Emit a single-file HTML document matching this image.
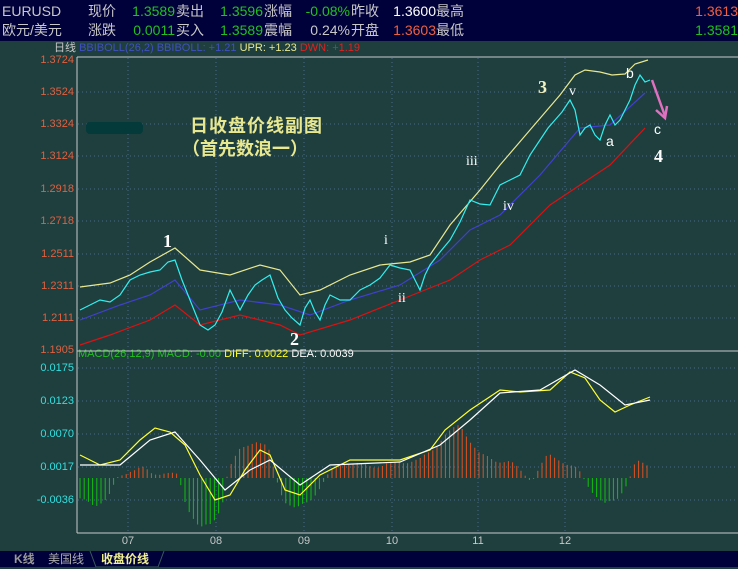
<!DOCTYPE html><html><head><meta charset="utf-8"><style>
body{margin:0;width:738px;height:567px;overflow:hidden;background:#1f3e3e;font-family:"Liberation Sans","Noto Sans CJK SC",sans-serif;position:relative}
.t{position:absolute;white-space:nowrap;font-size:14px;line-height:20px}
.n{position:absolute;white-space:nowrap;font-size:14px;line-height:20px;text-align:right;width:80px}
#hd{position:absolute;left:0;top:0;width:738px;height:41px;background:#00003a}
.g{color:#22c022}.w{color:#c8c8c8}.r{color:#f06040}.wh{color:#fff}
#tabs{position:absolute;left:0;top:551px;width:738px;height:16px;background:#00003a}
.pl{position:absolute;left:0;width:74px;text-align:right;font-size:11px;line-height:12px;color:#e06040}
.ml{position:absolute;left:0;width:74px;text-align:right;font-size:11px;line-height:12px;color:#30e0e0}
.xl{position:absolute;width:30px;text-align:center;font-size:11px;line-height:12px;color:#c8c8c8;top:535px}
.a{position:absolute;font-family:"Liberation Serif",serif;color:#fff;line-height:1}
</style></head><body>
<div id="hd">
<div class="t w" style="left:2px;top:1px">EURUSD</div>
<div class="t w" style="left:88px;top:1px">现价</div>
<div class="n g" style="left:95px;top:1px">1.3589</div><div class="t w" style="left:176px;top:1px">卖出</div>
<div class="n g" style="left:183px;top:1px">1.3596</div><div class="t w" style="left:264px;top:1px">涨幅</div>
<div class="n g" style="left:270px;top:1px">-0.08%</div><div class="t w" style="left:351px;top:1px">昨收</div>
<div class="n wh" style="left:356px;top:1px">1.3600</div><div class="t w" style="left:436px;top:1px">最高</div>
<div class="n r" style="left:658px;top:1px">1.3613</div>
<div class="t w" style="left:2px;top:20px">欧元/美元</div>
<div class="t w" style="left:88px;top:20px">涨跌</div>
<div class="n g" style="left:95px;top:20px">0.0011</div><div class="t w" style="left:176px;top:20px">买入</div>
<div class="n g" style="left:183px;top:20px">1.3589</div><div class="t w" style="left:264px;top:20px">震幅</div>
<div class="n w" style="left:270px;top:20px">0.24%</div><div class="t w" style="left:351px;top:20px">开盘</div>
<div class="n r" style="left:356px;top:20px">1.3603</div><div class="t w" style="left:436px;top:20px">最低</div>
<div class="n g" style="left:658px;top:20px">1.3581</div>
</div>
<div class="t" style="left:54px;top:40px;font-size:11px;line-height:16px"><span class="w">日线</span> <span style="color:#4050c0">BBIBOLL(26,2) BBIBOLL: +1.21</span> <span style="color:#e8e890">UPR: +1.23</span> <span style="color:#e02020">DWN: +1.19</span></div>
<div class="t" style="left:78px;top:346px;font-size:11px;line-height:16px"><span class="g">MACD(26,12,9) MACD: -0.00</span> <span style="color:#ffff20">DIFF: 0.0022</span> <span class="wh">DEA: 0.0039</span></div>
<div class="pl" style="top:54px">1.3724</div><div class="pl" style="top:86px">1.3524</div><div class="pl" style="top:118px">1.3324</div><div class="pl" style="top:150px">1.3124</div><div class="pl" style="top:183px">1.2918</div><div class="pl" style="top:215px">1.2718</div><div class="pl" style="top:248px">1.2511</div><div class="pl" style="top:280px">1.2311</div><div class="pl" style="top:312px">1.2111</div><div class="pl" style="top:344px">1.1905</div>
<div class="ml" style="top:362px">0.0175</div><div class="ml" style="top:395px">0.0123</div><div class="ml" style="top:428px">0.0070</div><div class="ml" style="top:461px">0.0017</div><div class="ml" style="top:494px">-0.0036</div>
<div class="xl" style="left:113px">07</div><div class="xl" style="left:201px">08</div><div class="xl" style="left:289px">09</div><div class="xl" style="left:377px">10</div><div class="xl" style="left:463px">11</div><div class="xl" style="left:550px">12</div>
<svg id="s" width="738" height="567" style="position:absolute;left:0;top:0">
<g stroke="#4a6a8a" stroke-dasharray="1,3">
<line x1="78" y1="92" x2="738" y2="92"/><line x1="78" y1="124" x2="738" y2="124"/><line x1="78" y1="156" x2="738" y2="156"/><line x1="78" y1="189" x2="738" y2="189"/><line x1="78" y1="221" x2="738" y2="221"/><line x1="78" y1="254" x2="738" y2="254"/><line x1="78" y1="286" x2="738" y2="286"/><line x1="78" y1="318" x2="738" y2="318"/>
<line x1="78" y1="368" x2="738" y2="368"/><line x1="78" y1="401" x2="738" y2="401"/><line x1="78" y1="434" x2="738" y2="434"/><line x1="78" y1="467" x2="738" y2="467"/><line x1="78" y1="500" x2="738" y2="500"/>
<line x1="128" y1="58" x2="128" y2="533"/><line x1="216" y1="58" x2="216" y2="533"/><line x1="304" y1="58" x2="304" y2="533"/><line x1="392" y1="58" x2="392" y2="533"/><line x1="478" y1="58" x2="478" y2="533"/><line x1="565" y1="58" x2="565" y2="533"/>
</g>
<g stroke="#c8c8c8"><line x1="77" y1="57" x2="738" y2="57"/><line x1="77" y1="57" x2="77" y2="533"/><line x1="77" y1="351" x2="738" y2="351"/><line x1="77" y1="533" x2="738" y2="533"/></g>
<g id="hist"></g>
<g fill="none" stroke-width="1.2">
<polyline stroke="#ffff30" points="80,455 100,465 120,460 140,440 155,428 170,432 185,445 200,475 215,500 230,495 245,470 260,450 270,455 285,490 300,495 320,475 350,460 400,460 430,450 445,430 470,410 500,390 520,392 550,390 570,372 585,378 600,400 615,412 630,405 650,397"/>
<polyline stroke="#fff" points="80,465 120,465 150,440 175,432 200,460 225,490 250,470 270,460 300,485 330,465 400,462 440,445 470,420 500,393 540,390 575,370 600,385 625,405 650,400"/>
<polyline stroke="#e8e890" points="80,287 110,283 130,275 150,262 175,248 200,270 230,275 260,265 280,270 300,295 320,290 350,275 380,265 410,262 430,255 450,225 480,190 500,165 530,130 560,95 575,75 585,70 600,72 612,75 625,74 635,64 648,60"/>
<polyline stroke="#e01010" points="80,345 110,335 150,320 175,305 200,325 240,315 280,325 300,335 350,320 400,300 450,280 480,260 510,245 550,205 580,185 610,165 645,128"/>
<polyline stroke="#4040d0" points="80,320 120,305 150,295 175,280 200,310 240,300 280,305 310,315 350,300 400,285 440,260 470,230 500,215 540,175 580,128 610,125 645,93"/>
<polyline stroke="#30f0f0" points="80,310 90,305 100,300 110,302 120,295 130,280 140,275 150,272 160,270 168,262 175,260 182,280 190,300 200,325 208,330 215,325 222,312 230,290 235,300 240,310 248,295 255,285 262,280 270,275 278,298 285,310 292,318 300,325 305,308 310,300 315,312 320,320 325,305 330,295 340,300 350,300 360,290 370,285 380,278 390,265 400,268 410,270 415,280 420,290 425,275 430,265 440,252 450,240 460,222 470,200 480,204 490,205 495,195 500,185 510,180 520,175 530,155 540,140 548,128 555,120 562,112 570,100 575,110 580,135 585,128 590,125 595,135 600,140 605,125 610,115 615,125 620,120 625,110 630,100 635,85 640,75 645,82 650,80"/>
<polyline stroke="#e070c0" stroke-width="2.5" points="652,80 665,116"/><polyline stroke="#e070c0" stroke-width="2.5" points="656,110 665,118 667,106"/>
</g>
<rect x="86" y="122" width="57" height="12" rx="4" fill="#053a3a"/>
</svg>
<div class="a" style="left:163px;top:232px;font-size:18px;font-weight:bold">1</div>
<div class="a" style="left:290px;top:330px;font-size:18px;font-weight:bold">2</div>
<div class="a" style="left:538px;top:78px;font-size:18px;font-weight:bold;color:#f0f0c0">3</div>
<div class="a" style="left:654px;top:147px;font-size:18px;font-weight:bold">4</div>
<div class="a" style="left:384px;top:234px;font-size:14px">i</div>
<div class="a" style="left:398px;top:292px;font-size:14px">ii</div>
<div class="a" style="left:466px;top:155px;font-size:14px">iii</div>
<div class="a" style="left:503px;top:200px;font-size:14px">iv</div>
<div class="a" style="left:569px;top:85px;font-size:14px">v</div>
<div class="a" style="left:606px;top:134px;font-size:14px;font-family:'Liberation Sans'">a</div>
<div class="a" style="left:626px;top:66px;font-size:14px;font-family:'Liberation Sans'">b</div>
<div class="a" style="left:654px;top:122px;font-size:14px;font-family:'Liberation Sans'">c</div>
<div class="t" style="left:190px;top:115px;font-size:18px;line-height:22px;font-weight:bold;color:#e8e890;letter-spacing:1px">日收盘价线副图</div>
<div class="t" style="left:182px;top:138px;font-size:18px;line-height:22px;font-weight:bold;color:#e8e890">（首先数浪一）</div>
<div id="tabs">
<div class="t" style="left:14px;top:-2px;color:#999;font-weight:bold;font-size:12px">K线</div>
<div class="t" style="left:48px;top:-2px;color:#aaa;font-size:12px">美国线</div>
<svg width="170" height="16" style="position:absolute;left:88px;top:0"><path d="M2,0 L8,16 L70,16 L76,0" fill="#00003a" stroke="#3a5a5a"/></svg>
<div class="t" style="left:101px;top:-2px;color:#f0f090;font-weight:bold;font-size:12px">收盘价线</div>
</div>
<script>
var hb=[[80,500],[95,505],[108,498],[118,478],[130,470],[142,468],[152,474],[165,472],[178,476],[186,505],[200,528],[212,525],[222,505],[228,470],[240,450],[255,440],[268,448],[276,478],[284,500],[296,510],[310,500],[322,485],[332,470],[345,462],[360,465],[380,466],[400,462],[420,460],[432,450],[445,435],[460,425],[470,440],[480,455],[495,460],[510,462],[522,472],[532,480],[548,455],[558,458],[568,465],[578,470],[590,488],[604,505],[616,500],[628,482],[636,462],[648,465],[652,470]];
function hv(x){for(var i=0;i<hb.length-1;i++){if(x>=hb[i][0]&&x<=hb[i+1][0]){var t=(x-hb[i][0])/(hb[i+1][0]-hb[i][0]);return hb[i][1]+t*(hb[i+1][1]-hb[i][1]);}}return 478;}
var h='';for(var x=80;x<=650;x+=4.2){var y=hv(x)+Math.sin(x*1.7)*2;h+='<line x1="'+x.toFixed(1)+'" y1="478" x2="'+x.toFixed(1)+'" y2="'+y.toFixed(1)+'" stroke="'+(y<478?'#e05020':'#10c010')+'"/>';}
document.getElementById('hist').innerHTML=h;
</script>
</body></html>
